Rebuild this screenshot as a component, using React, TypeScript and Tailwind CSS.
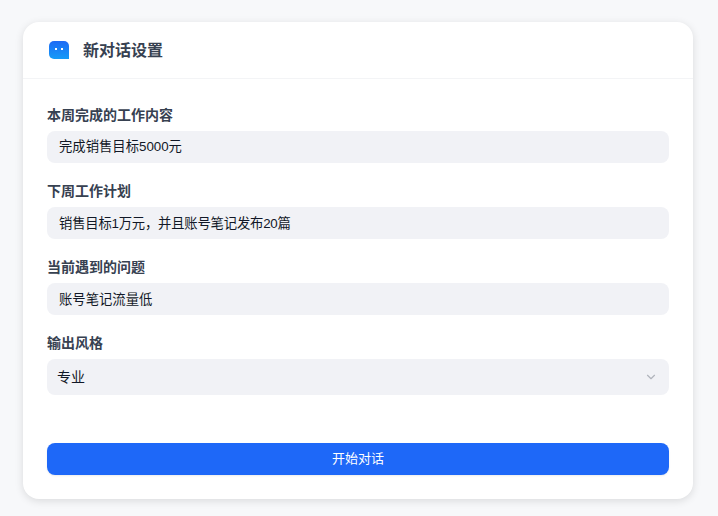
import { ChevronDown } from 'lucide-react';

const fields = [
  { label: '本周完成的工作内容', value: '完成销售目标5000元', valueClass: '' },
  { label: '下周工作计划', value: '销售目标1万元，并且账号笔记发布20篇', valueClass: 'tracking-[-0.2px] pt-[1px]' },
  { label: '当前遇到的问题', value: '账号笔记流量低', valueClass: 'pt-[1px]' },
];

function ChatIcon() {
  return (
    <svg width="20" height="18" viewBox="0 0 20 18" className="block">
      <defs>
        <linearGradient id="chatFill" x1="0" y1="0" x2="0" y2="1">
          <stop offset="0" stopColor="#1f6bf5" />
          <stop offset="1" stopColor="#159bf7" />
        </linearGradient>
      </defs>
      <path d="M5 0h10a5 5 0 0 1 5 5v13H5a5 5 0 0 1-5-5V5a5 5 0 0 1 5-5z" fill="url(#chatFill)" />
      <rect x="6" y="7" width="2" height="2" fill="#fff" />
      <rect x="12" y="7" width="2" height="2" fill="#fff" />
    </svg>
  );
}

export default function App() {
  return (
    <div className="h-[516px] w-[718px] overflow-hidden bg-[#f7f8fa] pt-[22px] pr-[25px] pl-[23px] font-['Liberation_Sans','Noto_Sans_CJK_SC',sans-serif] text-[#1f2937]">
      <div className="h-[477px] rounded-2xl bg-white shadow-[0_2px_8px_rgba(0,0,0,0.12)]">
        {/* Header */}
        <div className="flex h-[57px] items-center gap-3 border-b border-[#f3f4f6] px-6">
          <div className="flex h-6 w-6 items-center justify-center">
            <ChatIcon />
          </div>
          <h1 className="pt-[2px] text-base font-semibold text-[#374151]">新对话设置</h1>
        </div>

        {/* Form */}
        <div className="px-6 pt-[26px]">
          {fields.map((field) => (
            <div key={field.label} className="mb-[18px]">
              <label className="mb-[6px] block text-sm leading-5 font-semibold text-[#374151]">
                {field.label}
              </label>
              <div className="flex h-8 items-center rounded-lg bg-[#f1f2f6] px-3 text-[13.33px] text-[#111827]">
                <span className={field.valueClass}>{field.value}</span>
              </div>
            </div>
          ))}

          <label className="mb-[6px] block text-sm leading-5 font-semibold text-[#374151]">
            输出风格
          </label>
          <div className="flex h-9 items-center justify-between rounded-lg bg-[#f1f2f6] pr-[11px] pl-[10px] text-sm text-[#111827]">
            <span>专业</span>
            <ChevronDown className="h-[14px] w-[14px] text-[#b0b4bc]" />
          </div>

          <button className="mt-12 h-8 w-full rounded-lg bg-[#1e68f8] text-[13px] text-white shadow-[0_1px_2px_rgba(0,0,0,0.08)]">
            开始对话
          </button>
        </div>
      </div>
    </div>
  );
}
